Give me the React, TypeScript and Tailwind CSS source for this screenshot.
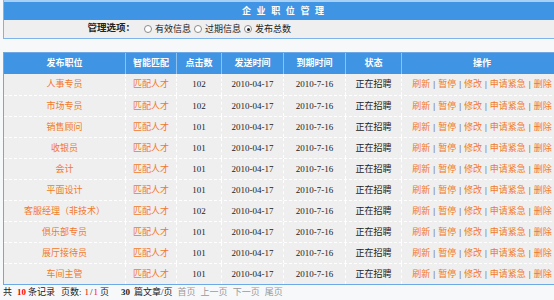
const jobs = [
  { title: "人事专员", clicks: 102 },
  { title: "市场专员", clicks: 102 },
  { title: "销售顾问", clicks: 101 },
  { title: "收银员", clicks: 101 },
  { title: "会计", clicks: 101 },
  { title: "平面设计", clicks: 101 },
  { title: "客服经理（非技术）", clicks: 102 },
  { title: "俱乐部专员", clicks: 101 },
  { title: "展厅接待员", clicks: 101 },
  { title: "车间主管", clicks: 101 },
];

const cols = "grid grid-cols-[122px_51px_45px_62px_62px_56px_1fr]";
const actions = ["刷新", "暂停", "修改", "申请紧急", "删除"];

function Radio({ checked, label }: { checked?: boolean; label: string }) {
  return (
    <span className="flex items-center mr-[3px]">
      <span className="w-[8px] h-[8px] rounded-full border border-[#8a8a8a] bg-white flex items-center justify-center mr-[3px]">
        {checked && <span className="w-[3px] h-[3px] rounded-full bg-[#222]" />}
      </span>
      {label}
    </span>
  );
}

export default function App() {
  return (
    <div
      className="w-[554px] h-[300px] overflow-hidden bg-[#f7f8fa] text-[9px] leading-none text-[#222]"
      style={{ fontFamily: '"Liberation Serif", "Noto Sans CJK SC", serif' }}
    >
      <div className="ml-[3px] w-[560px]">
        {/* header box */}
        <div className="border-x border-b border-[#7fb4ea]">
          <div className="h-[20px] bg-[#3f95e4] border-t-2 border-[#a8cff4] flex items-center justify-center">
            <span className="font-bold text-white tracking-[5.6px] pl-[5.6px]">企业职位管理</span>
          </div>
          <div className="h-[18px] bg-[#efefef] flex items-center">
            <span className="w-[131px] text-right font-bold text-[9.5px]">管理选项：</span>
            <span className="ml-[9px] flex items-center">
              <Radio label="有效信息" />
              <Radio label="过期信息" />
              <Radio checked label="发布总数" />
            </span>
          </div>
        </div>

        {/* table */}
        <div className="mt-[13px] border border-[#6ea9e6]">
          <div className={`${cols} h-[21px] bg-[#3f95e4] text-white font-bold`}>
            {["发布职位", "智能匹配", "点击数", "发送时间", "到期时间", "状态", "操作"].map((h, i) => (
              <div
                key={h}
                className={`flex items-center justify-center ${i < 6 ? "border-r border-[#8fc2f0]" : ""}`}
              >
                {h}
              </div>
            ))}
          </div>
          {jobs.map((job, r) => (
            <div
              key={job.title}
              className={`${cols} h-[21px] bg-[#efefef] ${r > 0 ? "border-t border-dashed border-white" : ""}`}
            >
              <div className="flex items-center justify-center border-r border-dashed border-white text-[#f2792a]">
                {job.title}
              </div>
              <div className="flex items-center justify-center border-r border-dashed border-white text-[#f2792a]">
                匹配人才
              </div>
              <div className="flex items-center justify-center border-r border-dashed border-white">{job.clicks}</div>
              <div className="flex items-center justify-center border-r border-dashed border-white">2010-04-17</div>
              <div className="flex items-center justify-center border-r border-dashed border-white">2010-7-16</div>
              <div className="flex items-center justify-center border-r border-dashed border-white">正在招聘</div>
              <div className="flex items-center justify-center">
                {actions.map((a, i) => (
                  <span key={a} className="flex items-center">
                    {i > 0 && <span className="ml-[3px] mr-[3px] text-[#333]">|</span>}
                    <span className="text-[#f2792a]">{a}</span>
                  </span>
                ))}
              </div>
            </div>
          ))}
        </div>

        {/* footer */}
        <div className="h-[14px] flex items-center whitespace-pre">
          <span>共</span>
          <span className="ml-[5px] text-[#ff0000] font-bold">10</span>
          <span className="ml-[2px]">条记录</span>
          <span className="ml-[6px]">页数:</span>
          <span className="ml-[3px] text-[#cc0000]">1</span>
          <span className="ml-[1px]">/</span>
          <span className="ml-[1px] text-[#ff0000]">1</span>
          <span className="ml-[2px]">页</span>
          <span className="ml-[12px] font-bold">30</span>
          <span className="ml-[4px]">篇文章/页</span>
          <span className="ml-[5px] text-[#999]">首页</span>
          <span className="ml-[5px] text-[#999]">上一页</span>
          <span className="ml-[5px] text-[#999]">下一页</span>
          <span className="ml-[5px] text-[#999]">尾页</span>
        </div>
      </div>
    </div>
  );
}
